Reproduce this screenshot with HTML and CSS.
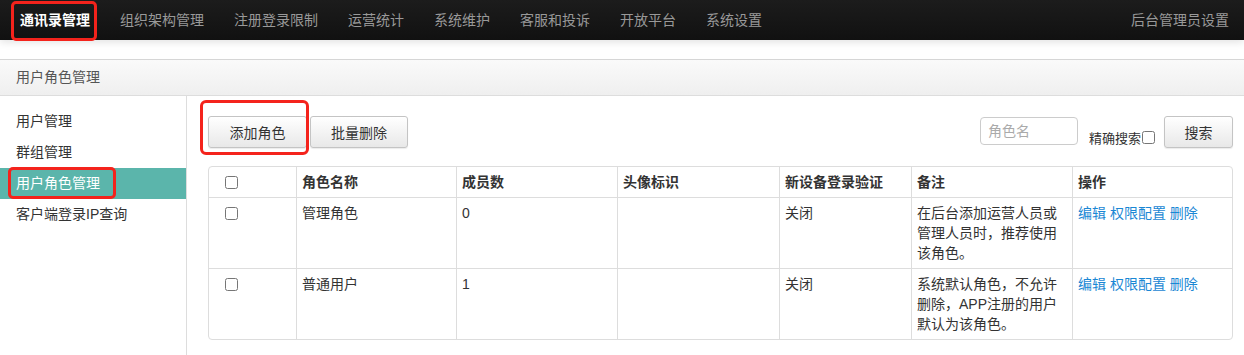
FILE: index.html
```html
<!DOCTYPE html>
<html lang="zh-CN">
<head>
    <meta charset="UTF-8">
    <meta name="viewport" content="width=device-width, initial-scale=1.0">
    <title>用户角色管理</title>
    <link rel="stylesheet" href="styles.css">
</head>
<body>
    <header class="navbar">
        <ul class="nav-menu">
            <li class="nav-item active">通讯录管理</li>
            <li class="nav-item">组织架构管理</li>
            <li class="nav-item">注册登录限制</li>
            <li class="nav-item">运营统计</li>
            <li class="nav-item">系统维护</li>
            <li class="nav-item">客服和投诉</li>
            <li class="nav-item">开放平台</li>
            <li class="nav-item">系统设置</li>
        </ul>
        <div class="nav-item nav-right">后台管理员设置</div>
    </header>

    <div class="breadcrumb">用户角色管理</div>

    <div class="layout">
        <ul class="sidebar">
            <li class="side-item">用户管理</li>
            <li class="side-item">群组管理</li>
            <li class="side-item active">用户角色管理</li>
            <li class="side-item">客户端登录IP查询</li>
        </ul>

        <main class="content">
            <div class="toolbar">
                <div class="toolbar-left">
                    <button class="btn btn-add">添加角色</button>
                    <button class="btn">批量删除</button>
                </div>
                <div class="toolbar-right">
                    <input type="text" class="search-input" placeholder="角色名">
                    <label class="exact-label">精确搜索<input type="checkbox" class="exact-check"></label>
                    <button class="btn btn-search">搜索</button>
                </div>
            </div>

            <table class="role-table">
                <colgroup>
                    <col style="width: 87px">
                    <col style="width: 160px">
                    <col style="width: 161px">
                    <col style="width: 162px">
                    <col style="width: 132px">
                    <col style="width: 161px">
                    <col>
                </colgroup>
                <thead>
                    <tr>
                        <th class="check-cell"><input type="checkbox"></th>
                        <th>角色名称</th>
                        <th>成员数</th>
                        <th>头像标识</th>
                        <th>新设备登录验证</th>
                        <th>备注</th>
                        <th>操作</th>
                    </tr>
                </thead>
                <tbody>
                    <tr>
                        <td class="check-cell"><input type="checkbox"></td>
                        <td>管理角色</td>
                        <td>0</td>
                        <td></td>
                        <td>关闭</td>
                        <td>在后台添加运营人员或管理人员时，推荐使用该角色。</td>
                        <td><a href="#">编辑</a> <a href="#">权限配置</a> <a href="#">删除</a></td>
                    </tr>
                    <tr>
                        <td class="check-cell"><input type="checkbox"></td>
                        <td>普通用户</td>
                        <td>1</td>
                        <td></td>
                        <td>关闭</td>
                        <td>系统默认角色，不允许删除，APP注册的用户默认为该角色。</td>
                        <td><a href="#">编辑</a> <a href="#">权限配置</a> <a href="#">删除</a></td>
                    </tr>
                </tbody>
            </table>
        </main>
    </div>
</body>
</html>
```

FILE: styles.css
```css
body {
    margin: 0;
    font-family: "Liberation Sans", "Noto Sans CJK SC", sans-serif;
    font-size: 14px;
    color: #333;
    background-color: #fff;
}

ul {
    list-style: none;
    margin: 0;
    padding: 0;
}

/* top navigation */
.navbar {
    height: 40px;
    display: flex;
    justify-content: space-between;
    background: linear-gradient(#1c1c1c, #111);
    box-shadow: 0 2px 8px rgba(0,0,0,0.12);
    margin-bottom: 19px;
}
.nav-menu {
    display: flex;
    padding-left: 5px;
}
.nav-item {
    position: relative;
    padding: 0 15px;
    line-height: 40px;
    color: #999;
}
.nav-item.active {
    color: #fff;
    font-weight: bold;
}
.nav-item.active::after { /* red annotation box */
    content: '';
    position: absolute;
    top: 1px;
    bottom: -1px;
    left: 6px;
    right: 8px;
    border: 3px solid #f4231c;
    border-radius: 5px;
}
.nav-right {
    padding-right: 15px;
}

/* breadcrumb bar */
.breadcrumb {
    height: 35px;
    line-height: 35px;
    padding-left: 16px;
    color: #555;
    border-top: 1px solid #d6d6d6;
    border-bottom: 1px solid #ddd;
    background: linear-gradient(#fafafa, #efefef);
}

.layout {
    display: flex;
    min-height: 259px;
}

/* left menu */
.sidebar {
    width: 186px;
    border-right: 1px solid #ddd;
    padding-top: 10px;
    flex-shrink: 0;
}
.side-item {
    position: relative;
    height: 31px;
    line-height: 31px;
    padding-left: 16px;
}
.side-item.active {
    background-color: #5bb5ab;
    color: #fff;
}
.side-item.active::after {
    content: '';
    position: absolute;
    top: -1px;
    bottom: 0;
    left: 8px;
    width: 102px;
    border: 3px solid #f4231c;
    border-radius: 5px;
}

/* main area */
.content {
    flex: 1;
    padding: 20px 11px 0 21px;
}

.toolbar {
    display: flex;
    justify-content: space-between;
    align-items: center;
    height: 32px;
}
.toolbar-left,
.toolbar-right {
    display: flex;
    align-items: center;
}

.btn {
    position: relative;
    height: 32px;
    padding: 0 20px;
    font-family: inherit;
    font-size: 14px;
    color: #333;
    background: linear-gradient(#fff, #e8e8e8);
    border: 1px solid #c4c4c4;
    border-radius: 3px;
    box-shadow: 0 1px 1px rgba(0,0,0,0.08);
    cursor: pointer;
}
.btn-add {
    width: 99px;
    margin-right: 3px;
}
.btn-add::after {
    content: '';
    position: absolute;
    top: -17px;
    bottom: -8px;
    left: -9px;
    right: -3px;
    border: 3px solid #f4231c;
    border-radius: 6px;
}

.search-input {
    width: 98px;
    height: 28px;
    box-sizing: border-box;
    padding: 0 7px;
    margin-top: -2px;
    font-family: inherit;
    font-size: 14px;
    border: 1px solid #ccc;
    border-radius: 4px;
}
.search-input::placeholder {
    color: #aaa;
}
.exact-label {
    display: flex;
    align-items: center;
    margin: 10px 9px 0 11px;
    font-size: 13px;
}
.exact-check {
    margin: 0 0 0 1px;
    width: 13px;
    height: 13px;
}
.btn-search {
    width: 69px;
    padding: 0;
}

/* table */
.role-table {
    width: 100%;
    margin-top: 18px;
    table-layout: fixed;
    border-collapse: separate;
    border-spacing: 0;
    border: 1px solid #ddd;
    border-radius: 4px;
}
.role-table th,
.role-table td {
    padding: 5px 5px;
    line-height: 20px;
    text-align: left;
    vertical-align: top;
    border-left: 1px solid #ddd;
    border-top: 1px solid #ddd;
    word-break: break-all;
}
.role-table th {
    font-weight: bold;
    border-top: none;
}
.role-table th:first-child,
.role-table td:first-child {
    border-left: none;
}
.check-cell {
    padding-left: 12px !important;
}
.check-cell input {
    margin: 4px 0 0 4px;
    vertical-align: top;
}
.role-table a {
    color: #1a87d4;
    text-decoration: none;
}
```
